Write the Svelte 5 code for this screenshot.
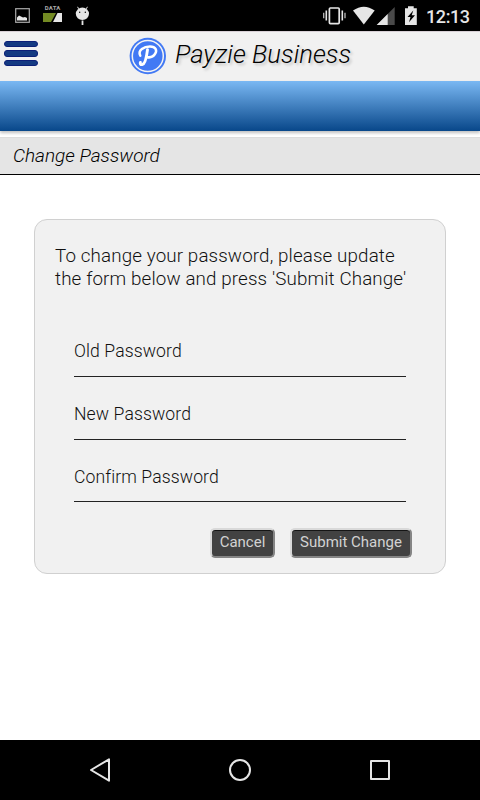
<script>
  let fields = [
    { name: "old", label: "Old Password" },
    { name: "new", label: "New Password" },
    { name: "confirm", label: "Confirm Password" }
  ];
</script>

<style>
  :global(body) {
    margin: 0;
    background: #fff;
  }

  .screen {
    display: flex;
    flex-direction: column;
    width: 480px;
    height: 800px;
    overflow: hidden;
    background: #fff;
    color: #000;
    font-family: Roboto, sans-serif;
    font-weight: 300;
  }

  .status {
    display: flex;
    justify-content: space-between;
    flex: none;
    height: 31px;
    background: #000;
  }
  .status__right {
    display: flex;
  }
  .status svg {
    display: block;
  }
  .status__data {
    font-size: 6px;
    font-weight: 700;
  }
  .status time {
    width: 54px;
    color: #e6e6e6;
    font-size: 18px;
    font-weight: 500;
    line-height: 33px;
    letter-spacing: -0.4px;
  }

  .header {
    box-sizing: border-box;
    display: grid;
    grid-template-columns: 129px 1fr;
    flex: none;
    height: 50px;
    border-top: 1px solid #d8d0d6;
    background: #f1f1f1;
  }
  .menu {
    box-sizing: border-box;
    display: flex;
    flex-direction: column;
    gap: 3px;
    width: 38px;
    margin: 0;
    padding: 9px 0 0 4px;
    border: 0;
    background: none;
  }
  .menu span {
    box-sizing: border-box;
    height: 6.3px;
    border: 1px solid #0c2078;
    border-radius: 3px;
    background: #143a82;
  }
  .brand {
    display: flex;
    gap: 8px;
    padding-top: 5px;
  }
  .brand svg {
    flex: none;
  }
  .brand h1 {
    margin: 0;
    font-size: 25.7px;
    font-style: italic;
    font-weight: 300;
    line-height: 34px;
    text-shadow: 2px 2px 3px rgba(0, 0, 0, 0.22);
    white-space: nowrap;
  }

  .ribbon {
    flex: none;
    height: 50px;
    background: linear-gradient(#7ab8f3, #08478a);
    box-shadow: 0 2px 3px rgba(0, 0, 0, 0.25);
  }

  .title {
    box-sizing: border-box;
    flex: none;
    height: 38px;
    margin: 6px 0 0;
    padding-left: 13px;
    border-top: 1px solid #ddd;
    border-bottom: 1px solid #000;
    background: #e5e5e5;
    font-size: 19px;
    font-style: italic;
    font-weight: 300;
    line-height: 36px;
  }

  .content {
    flex: 1;
    padding: 44px 34px 0;
  }
  .card {
    box-sizing: border-box;
    height: 355px;
    padding: 25px 20px 0;
    border: 1px solid #d0d0d0;
    border-radius: 13px;
    background: #f1f1f1;
  }
  .card p {
    margin: 0 0 39px;
    color: #111;
    font-size: 18.8px;
    line-height: 23px;
    letter-spacing: 0.12px;
    white-space: nowrap;
  }
  .field {
    box-sizing: border-box;
    display: block;
    width: 332px;
    height: 62.5px;
    margin-left: 19px;
    padding-top: 16px;
    border-bottom: 1px solid #222;
    color: #111;
    font-size: 17.6px;
    line-height: 43px;
    letter-spacing: 0.1px;
  }
  .field:first-of-type {
    height: 47px;
    padding-top: 0;
  }

  .actions {
    display: flex;
    gap: 15px;
    margin-top: 26px;
    padding-left: 155px;
  }
  .btn {
    box-sizing: border-box;
    width: 65px;
    height: 30px;
    padding: 0 0 2px;
    border: 2px solid;
    border-color: #d9d9d9 #858585 #858585 #d9d9d9;
    border-radius: 5px;
    background: #424242;
    box-shadow: inset 0 1px 0 #151515;
    color: #d2d2d2;
    font: 400 15px/24px Roboto, sans-serif;
    white-space: nowrap;
  }
  .btn--wide {
    width: 122px;
  }

  .nav {
    flex: none;
    height: 60px;
    background: #000;
  }
</style>

<div class="screen">
  <div class="status">
    <svg width="100" height="31" viewBox="0 0 100 31">
      <rect x="15.7" y="8.7" width="13.6" height="13.6" fill="none" stroke="#aaa" stroke-width="1.2" />
      <path d="M17 20.5v-3l2-2 2 1 2 1 2-.5 2 1v2.5z" fill="#e6e6e6" />
      <text class="status__data" x="44.8" y="10.3" fill="#aaa" textLength="15.5">DATA</text>
      <path d="M43 13h13l-5 9h-8z" fill="#738a23" />
      <path d="M57.5 13H62v9h-9z" fill="#e6e6e6" />
      <path d="M78.6 8.8l-1-2M86.4 8.8l1-2" fill="none" stroke="#e6e6e6" />
      <ellipse cx="82.4" cy="13.8" rx="6.6" ry="6.2" fill="#e6e6e6" />
      <path d="M82.5 20.5v4.5" stroke="#e6e6e6" stroke-width="1.8" />
      <circle cx="79.7" cy="12.3" r=".7" />
      <circle cx="85.3" cy="12.3" r=".7" />
    </svg>
    <div class="status__right">
      <svg width="106" height="31" viewBox="320 0 106 31">
        <rect x="329.4" y="8" width="9.8" height="15.6" rx="1" fill="none" stroke="#e6e6e6" stroke-width="1.7" />
        <path d="M326.3 10.5v10M342.3 10.5v10" stroke="#e6e6e6" stroke-width="1.6" />
        <path d="M323.7 12.8v5.4M345 12.8v5.4" stroke="#bbb" stroke-width="1.3" />
        <path d="M353 10.6Q363.8 2.8 374.7 10.6L363.8 24.6z" fill="#e6e6e6" />
        <path d="M394.7 7v18H376.7z" fill="#4a4a4a" />
        <path d="M387.7 14v11h-11z" fill="#e6e6e6" />
        <path d="M405 8.3h3V6.2h5.7v2.1h3.1V25H405z" fill="#e6e6e6" />
        <path d="M413.3 10.5l-5.8 6.5h3l-1.5 5.3 6-7h-3.3z" fill="#000" />
      </svg>
      <time>12:13</time>
    </div>
  </div>

  <header class="header">
    <button class="menu" aria-label="Menu">
      <span></span>
      <span></span>
      <span></span>
    </button>
    <div class="brand">
      <svg width="38" height="38" viewBox="0 0 38 38">
        <circle cx="18.8" cy="19" r="18.2" fill="#4279f4" />
        <circle cx="18.8" cy="19" r="15.5" fill="none" stroke="#f4f4f4" stroke-width="1.5" />
        <g fill="none" stroke="#fff" stroke-linecap="round" stroke-linejoin="round">
          <path d="M18.5 12.7C17.7 19 16.3 27 13.2 27.6c-1.7.3-2.3-1-1.8-2.2" stroke-width="2.9" />
          <path d="M11.3 18.7C8.4 12.8 15.2 9.5 21 9.5c6 0 7.2 3.8 5.2 7.2-1.6 2.7-4.8 4.1-8 3.5" stroke-width="2.5" />
        </g>
      </svg>
      <h1>Payzie Business</h1>
    </div>
  </header>

  <div class="ribbon"></div>
  <h2 class="title">Change Password</h2>

  <main class="content">
    <form class="card">
      <p>
        To change your password, please update<br />
        the form below and press 'Submit Change'
      </p>
      {#each fields as field (field.name)}
        <label class="field">{field.label}</label>
      {/each}
      <div class="actions">
        <button type="button" class="btn">Cancel</button>
        <button type="button" class="btn btn--wide">Submit Change</button>
      </div>
    </form>
  </main>

  <nav class="nav">
    <svg width="480" height="60" viewBox="0 0 480 60" fill="none" stroke="#e6e6e6" stroke-width="2" stroke-linejoin="round">
      <path d="M109 19.3v21.4L91 30z" />
      <circle cx="240" cy="30" r="10" />
      <rect x="371" y="21" width="18" height="18" />
    </svg>
  </nav>
</div>
